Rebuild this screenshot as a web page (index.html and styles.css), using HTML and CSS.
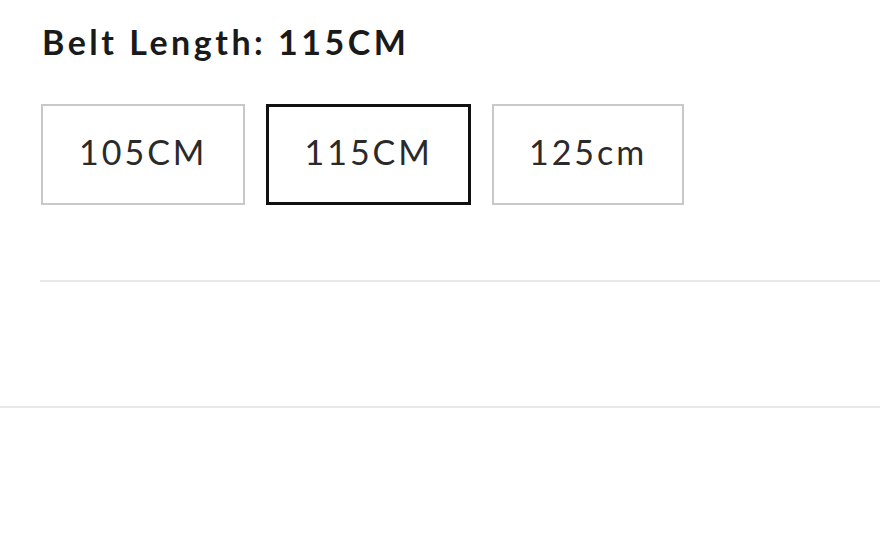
FILE: index.html
```html
<!DOCTYPE html>
<html lang="en">
<head>
  <meta charset="UTF-8">
  <meta name="viewport" content="width=device-width, initial-scale=1.0">
  <title>Belt Length</title>
  <link rel="stylesheet" href="styles.css">
</head>
<body>
  <div class="product-option">
    <h2 class="option-title">Belt Length: <span class="option-value">115CM</span></h2>
    <div class="option-list">
      <span class="option-item">105CM</span>
      <span class="option-item active">115CM</span>
      <span class="option-item">125cm</span>
    </div>
    <div class="divider"></div>
  </div>
  <div class="section-divider"></div>
</body>
</html>
```

FILE: styles.css
```css
body{
  margin: 0;
  background: #fff;
  font-family: Lato, "Liberation Sans", sans-serif;
  color: #222;
}
.product-option{
  padding: 22px 0 0 42px;
}
.option-title{
  margin: 0;
  font-size: 34px;
  font-weight: 700;
  line-height: 40px;
  letter-spacing: 3.5px;
  color: #1a1a1a;
}
.option-list{
  display: flex;
  gap: 21px;
  margin-top: 42px;
  margin-left: -1px;
}
.option-item{
  display: flex;
  align-items: center;
  justify-content: center;
  box-sizing: border-box;
  height: 101px;
  padding: 0 36px 7px;
  border: 2px solid #c8c8c8;
  font-size: 34px;
  letter-spacing: 3px;
  color: #2a2a2a;
  cursor: pointer;
}
.option-item.active{
  padding: 0 35px 7px;
  border: 3px solid #111;
}
.option-item:last-child{
  padding: 0 35px 7px;
}
.divider{
  height: 2px;
  margin: 75px 0 0 -2px;
  background: #e8e8e8;
}
.section-divider{
  height: 2px;
  margin-top: 124px;
  background: #e8e8e8;
}
```
